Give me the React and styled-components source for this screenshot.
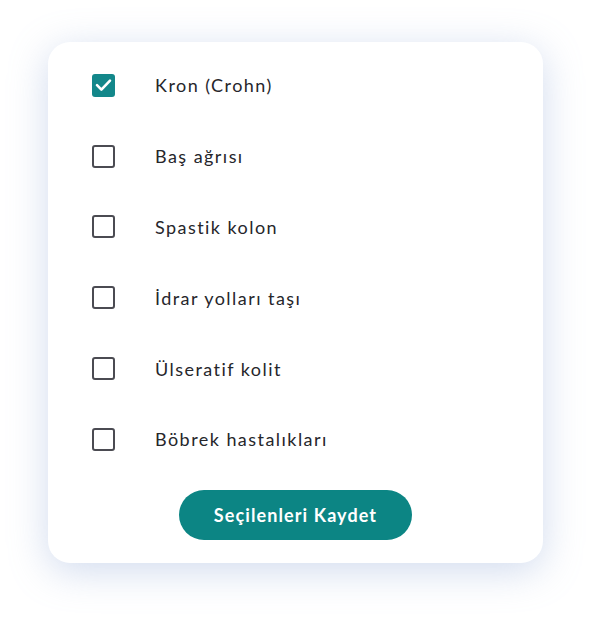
import { useState } from "react";
import styled, { createGlobalStyle } from "styled-components";

const Global = createGlobalStyle`
  body {
    margin: 0;
    background: #ffffff;
    font-family: "Lato", "Noto Sans", sans-serif;
  }
`;

const Page = styled.div`
  padding: 42px 48px 54px;
`;

const Card = styled.div`
  width: 495px;
  height: 521px;
  box-sizing: border-box;
  background: #fff;
  border-radius: 22px;
  box-shadow: 0 8px 38px rgba(145, 170, 215, 0.42);
  padding: 8px 0 22px 44px;
  display: flex;
  flex-direction: column;
`;

const List = styled.div`
  display: flex;
  flex-direction: column;
`;

const Row = styled.label`
  height: 70.8px;
  display: flex;
  align-items: center;
  gap: 40px;
  cursor: pointer;
`;

const Box = styled.span`
  width: 23px;
  height: 23px;
  box-sizing: border-box;
  border-radius: 3px;
  border: ${(p) => (p.$checked ? "none" : "2.5px solid #4b4b52")};
  background: ${(p) => (p.$checked ? "#13878a" : "#fff")};
  display: flex;
  align-items: center;
  justify-content: center;
`;

const Label = styled.span`
  font-family: "Lato", "Noto Sans", sans-serif;
  font-size: 18px;
  letter-spacing: 1.45px;
  color: #26262b;
`;

const Footer = styled.div`
  margin-top: 15px;
  padding-right: 44px;
  display: flex;
  justify-content: center;
`;

const SaveButton = styled.button`
  width: 233px;
  height: 50px;
  border: none;
  border-radius: 25px;
  background: #0c8584;
  color: #fff;
  font-family: "Lato", "Noto Sans", sans-serif;
  font-weight: 700;
  font-size: 18px;
  letter-spacing: 1.1px;
  cursor: pointer;
`;

const items = [
  "Kron (Crohn)",
  "Baş ağrısı",
  "Spastik kolon",
  "İdrar yolları taşı",
  "Ülseratif kolit",
  "Böbrek hastalıkları",
];

export default function App() {
  const [checked, setChecked] = useState([true, false, false, false, false, false]);
  const toggle = (i) => setChecked((c) => c.map((v, j) => (j === i ? !v : v)));

  return (
    <Page>
      <Global />
      <Card>
        <List>
          {items.map((t, i) => (
            <Row key={t} onClick={() => toggle(i)}>
              <Box $checked={checked[i]}>
                {checked[i] && (
                  <svg width="17" height="14" viewBox="0 0 17 14">
                    <path d="M2 7.2l4.4 4.4L15 2.6" fill="none" stroke="#fff" strokeWidth="2.6" strokeLinecap="round" strokeLinejoin="round" />
                  </svg>
                )}
              </Box>
              <Label>{t}</Label>
            </Row>
          ))}
        </List>
        <Footer>
          <SaveButton>Seçilenleri Kaydet</SaveButton>
        </Footer>
      </Card>
    </Page>
  );
}
